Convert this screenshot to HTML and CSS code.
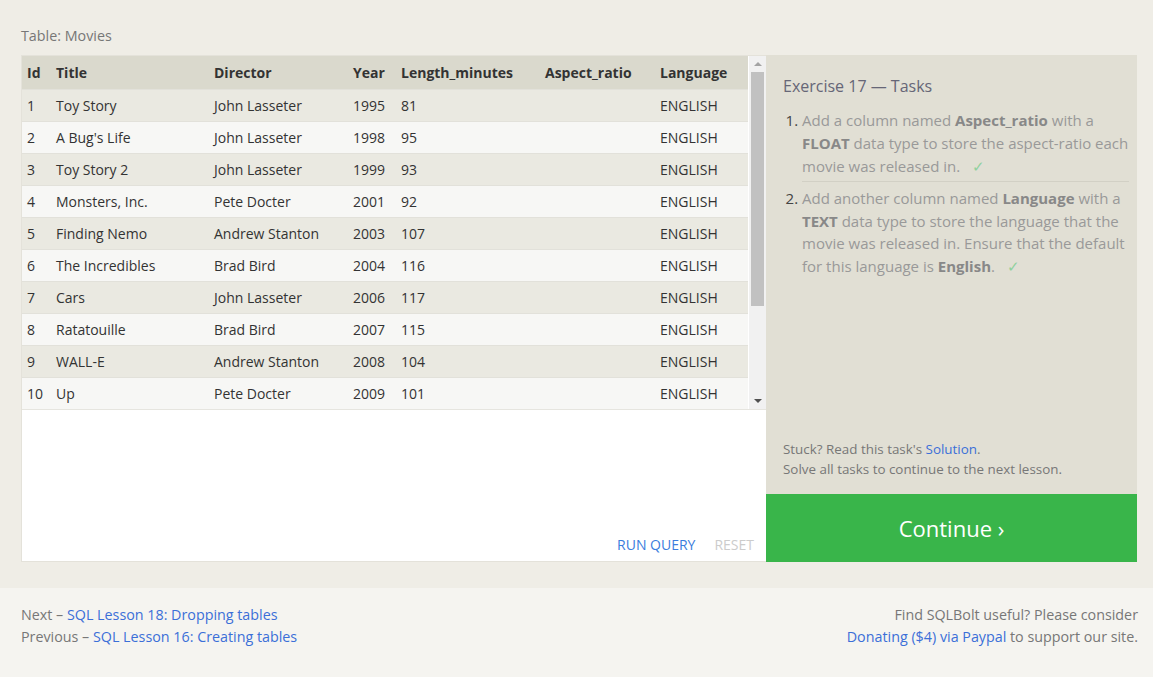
FILE: index.html
```html
<!DOCTYPE html>
<html>
<head>
<meta charset="utf-8">
<link rel="stylesheet" href="styles.css">
</head>
<body>
<div class="main">
  <div class="table-label">Table: Movies</div>
  <div class="exercise">
    <div class="left">
      <div class="results">
        <div class="table-wrap">
          <table class="movies">
            <colgroup>
              <col class="c-id"><col class="c-title"><col class="c-dir"><col class="c-year"><col class="c-len"><col class="c-asp"><col class="c-lang">
            </colgroup>
            <thead>
              <tr><th>Id</th><th>Title</th><th>Director</th><th>Year</th><th>Length_minutes</th><th>Aspect_ratio</th><th>Language</th></tr>
            </thead>
            <tbody>
              <tr><td>1</td><td>Toy Story</td><td>John Lasseter</td><td>1995</td><td>81</td><td></td><td>ENGLISH</td></tr>
              <tr><td>2</td><td>A Bug's Life</td><td>John Lasseter</td><td>1998</td><td>95</td><td></td><td>ENGLISH</td></tr>
              <tr><td>3</td><td>Toy Story 2</td><td>John Lasseter</td><td>1999</td><td>93</td><td></td><td>ENGLISH</td></tr>
              <tr><td>4</td><td>Monsters, Inc.</td><td>Pete Docter</td><td>2001</td><td>92</td><td></td><td>ENGLISH</td></tr>
              <tr><td>5</td><td>Finding Nemo</td><td>Andrew Stanton</td><td>2003</td><td>107</td><td></td><td>ENGLISH</td></tr>
              <tr><td>6</td><td>The Incredibles</td><td>Brad Bird</td><td>2004</td><td>116</td><td></td><td>ENGLISH</td></tr>
              <tr><td>7</td><td>Cars</td><td>John Lasseter</td><td>2006</td><td>117</td><td></td><td>ENGLISH</td></tr>
              <tr><td>8</td><td>Ratatouille</td><td>Brad Bird</td><td>2007</td><td>115</td><td></td><td>ENGLISH</td></tr>
              <tr><td>9</td><td>WALL-E</td><td>Andrew Stanton</td><td>2008</td><td>104</td><td></td><td>ENGLISH</td></tr>
              <tr><td>10</td><td>Up</td><td>Pete Docter</td><td>2009</td><td>101</td><td></td><td>ENGLISH</td></tr>
            </tbody>
          </table>
        </div>
        <div class="scrollbar">
          <div class="arrow up"></div>
          <div class="track"><div class="thumb"></div></div>
          <div class="arrow down"></div>
        </div>
      </div>
      <div class="editor">
        <div class="actions">
          <span class="run">RUN QUERY</span>
          <span class="reset">RESET</span>
        </div>
      </div>
    </div>
    <div class="right">
      <div class="tasks">
        <h2 class="tasks-title">Exercise 17 — Tasks</h2>
        <ol class="task-list">
          <li>Add a column named <b>Aspect_ratio</b> with a <b>FLOAT</b> data type to store the aspect-ratio each movie was released in. <span class="check">✓</span></li>
          <li>Add another column named <b>Language</b> with a <b>TEXT</b> data type to store the language that the movie was released in. Ensure that the default for this language is <b>English</b>. <span class="check">✓</span></li>
        </ol>
      </div>
      <div class="help">
        <div>Stuck? Read this task's <a class="link">Solution</a>.</div>
        <div>Solve all tasks to continue to the next lesson.</div>
      </div>
      <div class="continue">Continue ›</div>
    </div>
  </div>
</div>
<div class="footer">
  <div class="nav">
    <div>Next – <a class="link">SQL Lesson 18: Dropping tables</a></div>
    <div>Previous – <a class="link">SQL Lesson 16: Creating tables</a></div>
  </div>
  <div class="donate">
    <div>Find SQLBolt useful? Please consider</div>
    <div><a class="link">Donating ($4) via Paypal</a> to support our site.</div>
  </div>
</div>
</body>
</html>
```
FILE: styles.css
```css
* { box-sizing: border-box; }
html, body { margin: 0; padding: 0; }
body {
  font-family: "Open Sans", "Noto Sans", sans-serif;
  font-size: 14px;
  color: #333;
  background: #f5f4f0;
}
.main {
  background: #efede6;
  padding: 26px 16px 26px 21px;
}
.table-label {
  color: #777;
  font-size: 14.3px;
  line-height: 20px;
  margin-bottom: 9px;
}
.exercise {
  display: flex;
  height: 507px;
}
.left {
  width: 745px;
  display: flex;
  flex-direction: column;
  background: #fff;
  border: 1px solid #e4e2da;
  border-right: none;
}
.results {
  display: flex;
  height: 354px;
  border-bottom: 1px solid #e6e5df;
}
.table-wrap {
  flex: 1;
  overflow: hidden;
}
.movies {
  width: 726px;
  table-layout: fixed;
  border-collapse: collapse;
}
.c-id { width: 29px; }
.c-title { width: 158px; }
.c-dir { width: 139px; }
.c-year { width: 48px; }
.c-len { width: 144px; }
.c-asp { width: 115px; }
.c-lang { width: 93px; }
.movies th, .movies td {
  text-align: left;
  padding: 0 0 0 5px;
  white-space: nowrap;
  overflow: hidden;
}
.movies th {
  background: #dad9cd;
  height: 33px;
  font-weight: bold;
  color: #333;
  padding-top: 1px;
}
.movies td {
  height: 32px;
  color: #333;
  border-top: 1px solid #e2e1da;
}
.movies tbody tr:nth-child(odd) td { background: #eae9e1; }
.movies tbody tr:nth-child(even) td { background: #f7f7f5; }
.scrollbar {
  width: 17px;
  background: #f1f1f1;
  display: flex;
  flex-direction: column;
}
.arrow {
  height: 16px;
  display: flex;
  align-items: center;
  justify-content: center;
}
.arrow::before {
  content: "";
  width: 0;
  height: 0;
  border-left: 4px solid transparent;
  border-right: 4px solid transparent;
}
.arrow.up::before { border-bottom: 4px solid #a3a3a3; }
.arrow.down::before { border-top: 4px solid #505050; }
.track {
  flex: 1;
  padding: 0 2px;
}
.thumb {
  height: 234px;
  background: #c1c1c1;
}
.editor {
  flex: 1;
  display: flex;
  flex-direction: column;
  justify-content: flex-end;
}
.actions {
  display: flex;
  justify-content: flex-end;
  gap: 19px;
  padding: 0 12px 7px 0;
  line-height: 18px;
  font-size: 14px;
}
.run { color: #3b7ddd; }
.reset { color: #ccc; }
.right {
  width: 371px;
  background: #e1dfd4;
  display: flex;
  flex-direction: column;
}
.tasks {
  flex: 1;
  padding: 20px 8px 0 17px;
}
.tasks-title {
  margin: 0;
  font-size: 16px;
  font-weight: normal;
  line-height: 22px;
  color: #667;
}
.task-list {
  margin: 12px 0 0;
  padding: 0 0 0 19px;
  font-size: 15px;
  line-height: 23px;
  color: #999;
}
.task-list li::marker { color: #444; }
.task-list li {
  padding: 0 0 3px;
}
.task-list li + li {
  border-top: 1px solid #d2d0c5;
  padding-top: 5px;
  line-height: 22.5px;
}
.task-list b { color: #888; }
.check {
  color: #8fd19e;
  margin-left: 8px;
}
.help {
  padding: 0 17px 15px;
  font-size: 13.4px;
  line-height: 20px;
  color: #777;
}
.link { color: #3b6fd8; text-decoration: none; }
.continue {
  height: 68px;
  background: #39b54a;
  color: #fff;
  font-size: 22px;
  display: flex;
  align-items: center;
  justify-content: center;
}
.footer {
  display: flex;
  justify-content: space-between;
  padding: 16px 15px 29px 21px;
  line-height: 22px;
  color: #777;
  font-size: 14.3px;
}
.donate { text-align: right; }
```
